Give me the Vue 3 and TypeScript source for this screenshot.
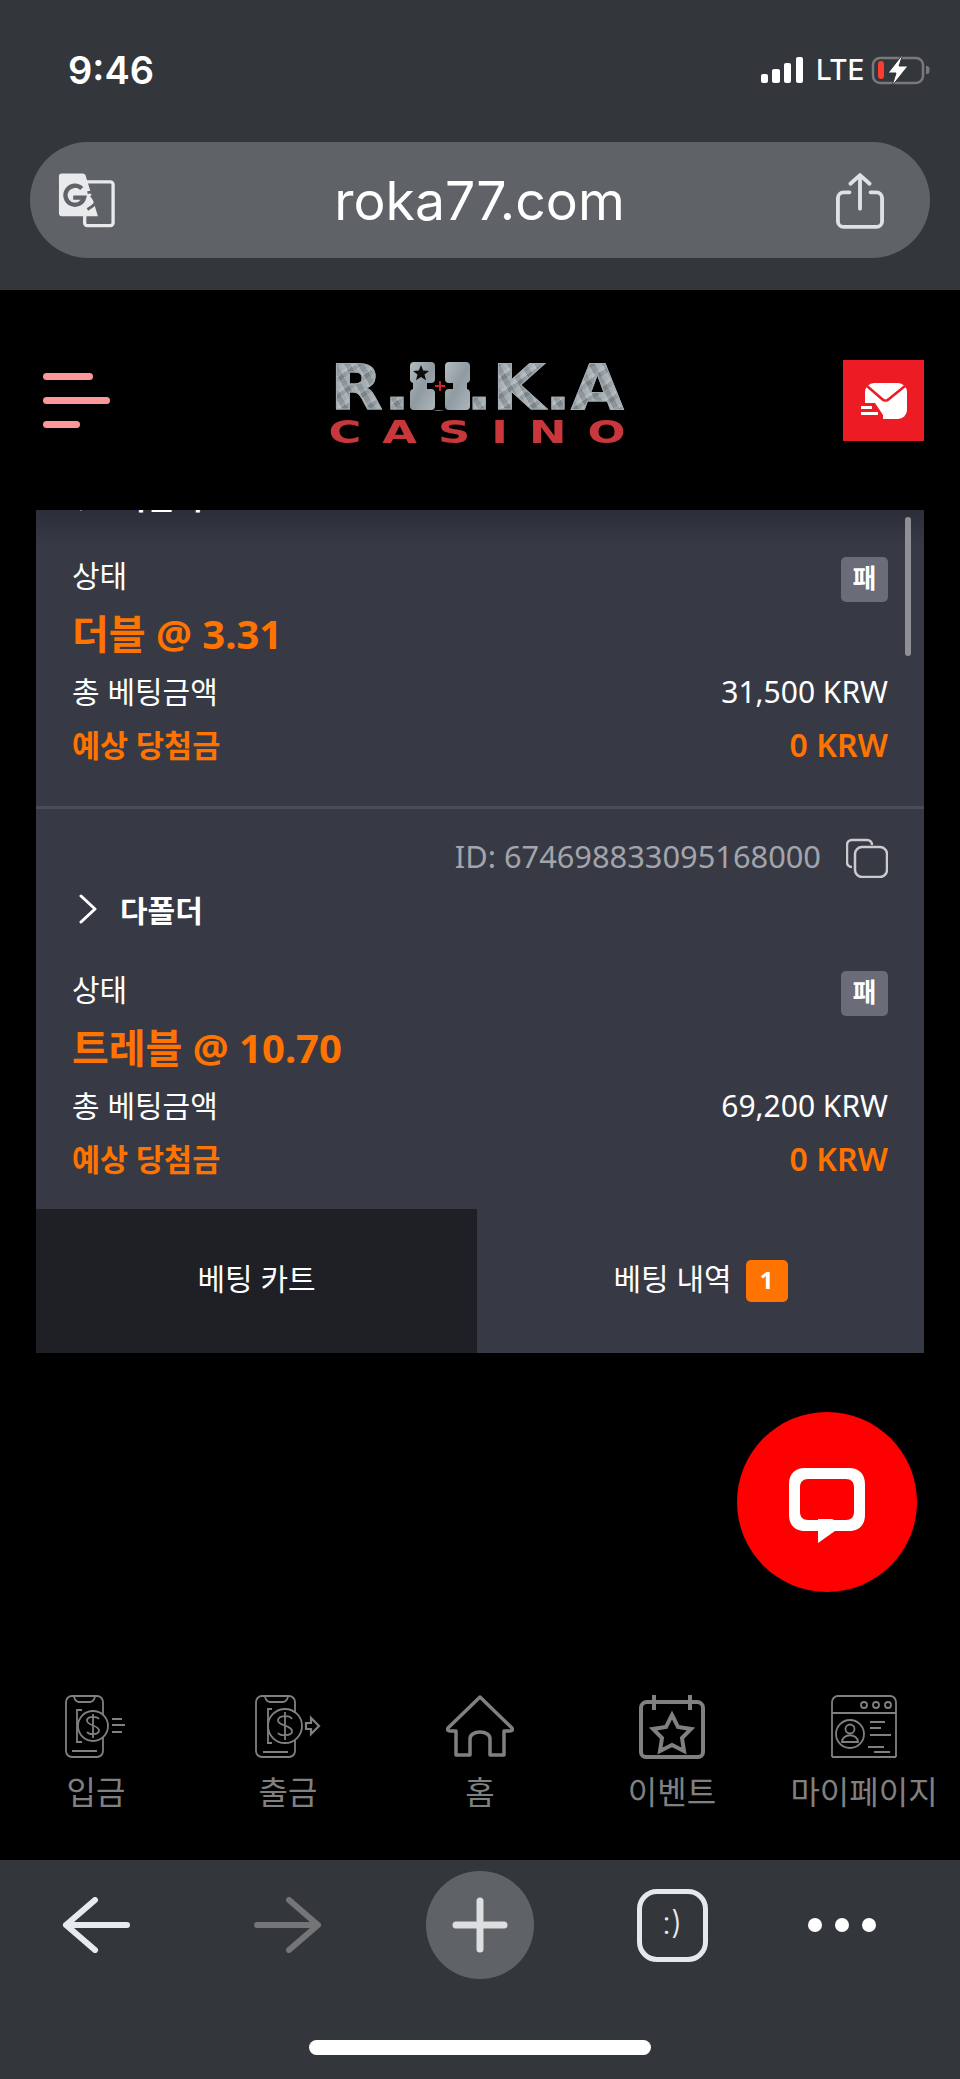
<script setup lang="ts">
interface Bet {
  id: string;
  name: string;
  total: string;
}

const bets: Bet[] = [
  { id: '', name: '더블 @ 3.31', total: '31,500 KRW' },
  { id: 'ID: 674698833095168000', name: '트레블 @ 10.70', total: '69,200 KRW' },
];
</script>

<template>
  <div class="screen">
    <!-- 브라우저 상단 -->
    <header class="top-chrome">
      <div class="status">
        <span class="time">9:46</span>
        <div class="status-right">
          <svg width="42" height="26" viewBox="0 0 42 26" fill="#fff">
            <rect x="0" y="17" width="7" height="9" rx="2" />
            <rect x="11" y="12" width="8" height="14" rx="2" />
            <rect x="23" y="6" width="7" height="20" rx="2" />
            <rect x="35" y="0" width="7" height="26" rx="2" />
          </svg>
          <span class="lte">LTE</span>
          <svg width="60" height="32" viewBox="0 0 60 32">
            <rect x="2" y="4" width="50" height="25" rx="7" fill="none" stroke="#77797c" stroke-width="2.5" />
            <rect x="7" y="7" width="6" height="18" rx="3" fill="#ff3b30" />
            <path d="M55 12c3 0 3.500 1 3.500 4s-.5 4-3.500 4z" fill="#77797c" />
            <path d="M32 0L17 19h8l-4 13 16-20h-9z" fill="#fff" stroke="#33363a" stroke-width="1" />
          </svg>
        </div>
      </div>
      <div class="url-pill">
        <svg class="translate" width="57" height="56" viewBox="0 0 60 58">
          <path d="M29 10h26a3 3 0 0 1 3 3v40a3 3 0 0 1-3 3H31a3 3 0 0 1-3-3z" fill="none" stroke="#e8eaec" stroke-width="3.500" />
          <path d="M4 1h22a3 3 0 0 1 3 2l13 43H4a3 3 0 0 1-3-3V4a3 3 0 0 1 3-3z" fill="#e8eaec" />
          <path d="M25 17a10 10 0 1 0 2.500 9.500H16" fill="none" stroke="#5f6367" stroke-width="4.500" />
          <path d="M31 21h19M41 17v4M46 21c-2 8-8 14-15 18M35 24l14 20" fill="none" stroke="#5f6367" stroke-width="3" />
        </svg>
        <span class="url">roka77.com</span>
        <svg class="share" width="48" height="58" viewBox="0 0 50 58" fill="none" stroke="#dfe2e5" stroke-width="4" stroke-linecap="round" stroke-linejoin="round">
          <path d="M14 20H8a6 6 0 0 0-6 6v24a6 6 0 0 0 6 6h34a6 6 0 0 0 6-6V26a6 6 0 0 0-6-6h-6" />
          <path d="M25 37V2M15 11l10-9 10 9" />
        </svg>
      </div>
    </header>

    <main class="page">
      <div class="site-head">
        <div class="menu-btn">
          <i class="bar bar-a"></i>
          <i class="bar bar-b"></i>
          <i class="bar bar-c"></i>
        </div>
        <div class="logo">
          <div class="logo-top">
            <span class="logo-word">R.O.K.A</span>
            <!-- 로고의 십자 장식 -->
            <svg class="logo-mark" width="62" height="48" viewBox="0 0 62 48">
              <defs>
                <linearGradient id="metal" x1="0" y1="0" x2="1" y2="1">
                  <stop offset="0" stop-color="#b4bcc1" />
                  <stop offset="0.5" stop-color="#8f9aa1" />
                  <stop offset="1" stop-color="#aeb6bb" />
                </linearGradient>
              </defs>
              <rect width="62" height="48" fill="#000" />
              <path
                fill="url(#metal)"
                d="M5 0h17a4 4 0 0 1 4 4v13a4 4 0 0 1-4 4h-4v6h4a4 4 0 0 1 4 4v13a4 4 0 0 1-4 4H5a4 4 0 0 1-4-4V31a4 4 0 0 1 3-4v-6a4 4 0 0 1-3-4V4a4 4 0 0 1 4-4z"
              />
              <path
                fill="url(#metal)"
                d="M40 0h17a4 4 0 0 1 4 4v13a4 4 0 0 1-3 4v6a4 4 0 0 1 3 4v13a4 4 0 0 1-4 4H40a4 4 0 0 1-4-4V31a4 4 0 0 1 4-4h4v-6h-4a4 4 0 0 1-4-4V4a4 4 0 0 1 4-4z"
              />
              <path d="M12 3l2.200 5.500 5.800.4-4.500 3.700 1.500 5.700-5-3.200-5 3.200 1.500-5.700L4 8.900l5.800-.4z" fill="#0c0c0c" />
              <path d="M26 24h10M31 19v10" stroke="#d0242c" stroke-width="2" />
            </svg>
          </div>
          <div class="logo-sub">CASINO</div>
        </div>
        <div class="mail-btn">
          <svg width="46" height="36" viewBox="0 0 46 36">
            <rect x="4" y="0" width="42" height="36" rx="9" fill="#fff" />
            <path d="M6 3l15 13c2 2 5 2 7 0L44 3" fill="none" stroke="#ed1c24" stroke-width="2.500" />
            <path d="M0 20h14l8 12v4H0z" fill="#ed1c24" />
            <path d="M0 24.500h11M0 30.500h17" stroke="#fff" stroke-width="3" />
          </svg>
        </div>
      </div>

      <section class="panel">
        <div class="bet-scroll">
          <div class="fade"></div>
          <div class="bet-list">
            <article v-for="(bet, index) in bets" :key="index" class="bet">
              <div class="id-row">
                <span v-if="bet.id" class="bet-id">{{ bet.id }}</span>
                <svg width="42" height="40" viewBox="0 0 42 40" fill="none" stroke="#c9cbcf" stroke-width="2.500">
                  <path d="M6 29c-3 0-5-2-5-5V7c0-3 2-5 5-5h15c3 0 5 2 5 5" />
                  <rect x="9" y="9" width="32" height="30" rx="7" />
                </svg>
              </div>
              <div class="title-row">
                <svg width="20" height="30" viewBox="0 0 20 30" fill="none" stroke="#fff" stroke-width="3" stroke-linecap="round" stroke-linejoin="round">
                  <path d="M3 2l14 13L3 28" />
                </svg>
                <span>다폴더</span>
              </div>
              <div class="state-row">
                <span>상태</span>
                <b class="result">패</b>
              </div>
              <div class="bet-name">{{ bet.name }}</div>
              <div class="amount-row">
                <span>총 베팅금액</span>
                <span>{{ bet.total }}</span>
              </div>
              <div class="amount-row win">
                <span>예상 당첨금</span>
                <span class="win-value">0 KRW</span>
              </div>
            </article>
          </div>
          <div class="scroll-thumb"></div>
        </div>
        <div class="tabs">
          <div class="tab active">베팅 카트</div>
          <div class="tab">베팅 내역<em class="count">1</em></div>
        </div>
      </section>

      <!-- 라이브챗 버튼 -->
      <div class="chat-fab">
        <svg width="76" height="76" viewBox="0 0 76 76">
          <path
            fill="#fff"
            fill-rule="evenodd"
            d="M16 1h44c10 0 16 6 16 16v31c0 10-6 16-16 16H46L29 76V64H16C6 64 0 58 0 48V17C0 7 6 1 16 1zM19 12c-5 0-8 3-8 8v25c0 5 3 8 8 8h10v-1h14l2 1h12c5 0 8-3 8-8V20c0-5-3-8-8-8z"
          />
        </svg>
      </div>

      <nav class="site-nav">
        <div class="nav-item">
          <svg width="100" height="64" viewBox="0 0 100 64" fill="none" stroke="#808080" stroke-width="1.800">
            <rect x="20" y="1" width="37" height="61" rx="6" />
            <path d="M28 2c1 3 2 5 5 5h11c3 0 4-2 5-5M26 56h25" />
            <path d="M36 15h-5v32h5" />
            <circle cx="47" cy="31" r="15" fill="#000" />
            <path d="M53 24c-2-3-11-3-12 1-1 6 13 5 12 11-1 4-10 4-12 1M47 19v24" />
            <path d="M66 24h10M66 30h13M66 37h10" />
          </svg>
          <span>입금</span>
        </div>
        <div class="nav-item">
          <svg width="100" height="64" viewBox="0 0 100 64" fill="none" stroke="#808080" stroke-width="1.800">
            <rect x="18" y="1" width="39" height="61" rx="6" />
            <path d="M27 2c1 3 2 5 5 5h13c3 0 4-2 5-5M25 57h25" />
            <path d="M34 14h-4v34h4" />
            <circle cx="47" cy="31" r="17" fill="#000" />
            <path d="M54 24c-2-4-13-4-14 1-1 6 15 5 14 12-1 4-12 4-14 1M47 17v28" />
            <path d="M68 28h5v-5l8 8-8 8v-5h-5z" stroke-width="2.200" />
          </svg>
          <span>출금</span>
        </div>
        <div class="nav-item">
          <svg width="100" height="64" viewBox="0 0 100 64" fill="none" stroke="#808080" stroke-width="3.500" stroke-linejoin="round">
            <path d="M50 2L18 33c-1 2 0 3 2 3h6v24h14V44c0-4 4-7 10-7s10 3 10 7v16h14V36h6c2 0 3-1 2-3z" />
          </svg>
          <span>홈</span>
        </div>
        <div class="nav-item">
          <svg width="100" height="64" viewBox="0 0 100 64" fill="none" stroke="#808080" stroke-width="4">
            <path d="M25 7h50a6 6 0 0 1 6 6v44a5 5 0 0 1-5 5H24a5 5 0 0 1-5-5V13a6 6 0 0 1 6-6z" />
            <path d="M32 0v15M68 0v15" />
            <path d="M50 20l6 12 13 2-9 9 2 13-12-6-12 6 2-13-9-9 13-2z" stroke-width="4" stroke-linejoin="miter" />
          </svg>
          <span>이벤트</span>
        </div>
        <div class="nav-item">
          <svg width="100" height="64" viewBox="0 0 100 64" fill="none" stroke="#808080" stroke-width="1.800">
            <path d="M18 62V7a6 6 0 0 1 6-6h52a6 6 0 0 1 6 6v55M18 62h64M18 18h64" />
            <circle cx="50" cy="10" r="3" />
            <circle cx="62" cy="10" r="3" />
            <circle cx="74" cy="10" r="3" />
            <circle cx="36" cy="39" r="14" />
            <circle cx="36" cy="34" r="4.500" />
            <path d="M28 47c0-9 16-9 16 0z" />
            <path d="M56 27h15M56 33h11M56 40h21M54 52h16M60 57h16" />
          </svg>
          <span>마이페이지</span>
        </div>
      </nav>
    </main>

    <!-- 브라우저 하단 -->
    <footer class="bottom-chrome">
      <div class="tool-row">
        <svg width="68" height="56" viewBox="0 0 68 56" fill="none" stroke="#e8ebee" stroke-width="6" stroke-linecap="round" stroke-linejoin="round">
          <path d="M65 28H4M33 3L4 28l29 25" />
        </svg>
        <svg width="68" height="56" viewBox="0 0 68 56" fill="none" stroke="#737577" stroke-width="6" stroke-linecap="round" stroke-linejoin="round">
          <path d="M3 28h61M35 3l29 25-29 25" />
        </svg>
        <div class="plus-btn">
          <svg width="56" height="56" viewBox="0 0 56 56" stroke="#dcdee0" stroke-width="7" stroke-linecap="round">
            <path d="M28 4v48M4 28h48" />
          </svg>
        </div>
        <div class="tabs-btn">:)</div>
        <div class="more-btn"><i></i><i></i><i></i></div>
      </div>
      <div class="home-bar"></div>
    </footer>
  </div>
</template>

<style>
html,
body {
  margin: 0;
  background: #000;
}
</style>

<style scoped>
.screen {
  position: relative;
  width: 960px;
  height: 2079px;
  overflow: hidden;
  display: flex;
  flex-direction: column;
  background: #000;
  color: #fff;
  font-family: 'Noto Sans', 'Noto Sans CJK KR', sans-serif;
}

/* 상단 */
.top-chrome {
  height: 290px;
  background: #33363a;
  font-family: Inter, 'Noto Sans', sans-serif;
}

.status {
  height: 142px;
  display: flex;
  align-items: center;
  justify-content: space-between;
  padding: 0 29px 2px 68px;
  box-sizing: border-box;
}

.time {
  font-size: 38px;
  font-weight: 600;
}

.status-right {
  display: flex;
  align-items: center;
  height: 32px;
}

.lte {
  margin: 0 13px;
  width: 42px;
  font-size: 28px;
  font-weight: 500;
  line-height: 32px;
}

.url-pill {
  height: 116px;
  margin: 0 30px;
  padding: 0 46px 0 28px;
  border-radius: 58px;
  background: #5f6367;
  display: flex;
  align-items: center;
  justify-content: space-between;
}

.url {
  margin-left: 8px;
  font-size: 53.500px;
  color: #fff;
}

.share {
  margin-top: 2px;
}

/* 헤더 */
.page {
  flex: 1;
  min-height: 0;
}

.site-head {
  height: 81px;
  margin-top: 70px;
  padding: 0 36px 0 43px;
  display: flex;
  align-items: center;
  justify-content: space-between;
}

.menu-btn {
  width: 67px;
  display: flex;
  flex-direction: column;
  gap: 17px;
}

.bar {
  display: block;
  height: 7px;
  border-radius: 4px;
  background: #fc9797;
}

.bar-a {
  width: 50px;
}

.bar-b {
  width: 67px;
}

.bar-c {
  width: 37px;
}

.logo {
  align-self: flex-start;
  width: 294px;
  text-align: center;
  font-family: 'DejaVu Sans', sans-serif;
  font-weight: 700;
}

.logo-top {
  position: relative;
  height: 55px;
}

.logo-word {
  display: block;
  font-size: 62px;
  line-height: 56px;
  white-space: nowrap;
  transform: scaleX(1.1);
  background-color: #9ca6ac;
  background-image:
    repeating-linear-gradient(63deg, rgba(255, 255, 255, 0.16) 0 3px, rgba(0, 0, 0, 0.1) 3px 8px, rgba(255, 255, 255, 0.08) 8px 11px),
    repeating-linear-gradient(-38deg, rgba(0, 0, 0, 0.12) 0 4px, rgba(255, 255, 255, 0.14) 4px 7px, rgba(0, 0, 0, 0) 7px 13px);
  -webkit-background-clip: text;
  background-clip: text;
  color: transparent;
  -webkit-text-stroke: 1px #a2abb0;
}

.logo-mark {
  position: absolute;
  left: 79px;
  top: 2px;
}

.logo-sub {
  margin-top: 3px;
  padding-left: 15px;
  font-size: 32px;
  line-height: 28px;
  letter-spacing: 15px;
  color: #c8373c;
  transform: scaleX(1.4);
}

.mail-btn {
  width: 81px;
  height: 81px;
  background: #ed1c24;
  display: flex;
  align-items: center;
  justify-content: center;
}

/* 패널 */
.panel {
  margin: 69px 36px 0;
  height: 843px;
  display: flex;
  flex-direction: column;
  background: #373a45;
}

.bet-scroll {
  position: relative;
  flex: 1;
  min-height: 0;
  overflow: hidden;
}

.bet-list {
  position: relative;
  margin-top: -115px;
}

.bet {
  padding: 29px 36px 40px;
  border-bottom: 3px solid #4a4d58;
  font-size: 30px;
}

.id-row {
  height: 40px;
  display: flex;
  align-items: center;
  justify-content: flex-end;
  gap: 25px;
  color: #a3a5ab;
}

.bet-id {
  font-size: 30.800px;
  line-height: 36px;
  margin-bottom: 4px;
}

.title-row {
  height: 52px;
  margin-top: 5px;
  display: flex;
  align-items: center;
  gap: 22px;
  padding-left: 6px;
  font-weight: 700;
}

/* 스크롤에 걸린 첫 항목 제목 */
.bet:first-child .title-row {
  margin-top: 6px;
}

.bet:first-child .state-row {
  margin-top: 34px;
}

.state-row {
  height: 46px;
  margin-top: 35px;
  display: flex;
  justify-content: space-between;
  line-height: 40px;
}

.result {
  width: 47px;
  height: 45px;
  margin-top: 1px;
  border-radius: 5px;
  background: #6a6d79;
  font-size: 26px;
  font-weight: 700;
  line-height: 43px;
  text-align: center;
}

.bet-name {
  height: 52px;
  margin-top: 7px;
  line-height: 50px;
  font-size: 40px;
  font-weight: 700;
  color: #ff7300;
}

.amount-row {
  height: 40px;
  margin-top: 12px;
  display: flex;
  justify-content: space-between;
  line-height: 38px;
}

.amount-row.win {
  margin-top: 13px;
  color: #ff7300;
  font-size: 30.500px;
  font-weight: 700;
  line-height: 38px;
}

.win-value {
  font-size: 32px;
  font-weight: 600;
}

.fade {
  position: absolute;
  left: 0;
  right: 0;
  top: 0;
  height: 36px;
  background: linear-gradient(#2b2e38, rgba(55, 58, 69, 0));
}

.scroll-thumb {
  position: absolute;
  top: 7px;
  right: 13px;
  width: 6px;
  height: 139px;
  border-radius: 3px;
  background: #8e9096;
}

.tabs {
  height: 144px;
  display: flex;
}

.tab {
  flex: 1;
  display: flex;
  align-items: center;
  justify-content: center;
  font-size: 30px;
  padding-bottom: 8px;
  box-sizing: border-box;
}

.tab.active {
  flex: 0 0 441px;
  background: #1e2025;
}

.count {
  width: 42px;
  height: 42px;
  margin: 8px 0 0 14px;
  border-radius: 5px;
  background: #ff7300;
  font-size: 24px;
  font-style: normal;
  font-weight: 700;
  line-height: 40px;
  text-align: center;
}

/* 채팅 버튼 */
.chat-fab {
  position: absolute;
  left: 737px;
  top: 1412px;
  width: 180px;
  height: 180px;
  border-radius: 50%;
  background: #f00;
  display: flex;
  align-items: center;
  justify-content: center;
}

.chat-fab svg {
  margin-top: 6px;
}

/* 하단 메뉴 */
.site-nav {
  margin-top: 342px;
  display: grid;
  grid-template-columns: repeat(5, 192px);
}

.nav-item {
  display: flex;
  flex-direction: column;
  align-items: center;
  color: #808080;
  font-size: 32px;
  line-height: 44px;
  white-space: nowrap;
}

.nav-item span {
  margin-top: 11px;
}

/* 브라우저 하단 */
.bottom-chrome {
  height: 219px;
  background: #33363a;
}

.tool-row {
  height: 108px;
  padding-top: 11px;
  display: grid;
  grid-template-columns: repeat(5, 192px);
  justify-items: center;
  align-items: center;
}

.plus-btn {
  width: 108px;
  height: 108px;
  border-radius: 50%;
  background: #5f6367;
  display: flex;
  align-items: center;
  justify-content: center;
}

.tabs-btn {
  width: 71px;
  height: 73px;
  box-sizing: border-box;
  border: 5px solid #e6e9ec;
  border-radius: 20px;
  font-family: Inter, sans-serif;
  font-size: 32px;
  font-weight: 300;
  line-height: 58px;
  text-align: center;
  color: #e6e9ec;
}

.more-btn {
  display: flex;
  gap: 13px;
  margin-right: 44px;
}

.more-btn i {
  width: 14px;
  height: 14px;
  border-radius: 50%;
  background: #fff;
}

.home-bar {
  width: 342px;
  height: 15px;
  margin: 61px auto 0;
  border-radius: 8px;
  background: #fff;
}
</style>
